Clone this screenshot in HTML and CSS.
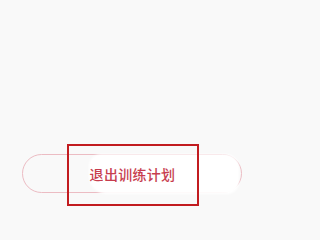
FILE: index.html
```html
<!DOCTYPE html>
<html lang="zh">
<head>
<meta charset="utf-8">
<link rel="stylesheet" href="styles.css">
</head>
<body>
<div class="page">
  <div class="footer">
    <div class="pill">
      <div class="smudge"></div>
      <span class="label">退出训练计划</span>
    </div>
  </div>
  <div class="mark"></div>
</div>
</body>
</html>
```
FILE: styles.css
```css
html, body {
  margin: 0;
  padding: 0;
  background: #f9f9f9;
}
.page {
  position: relative;
  width: 264px;
  height: 212px;
  overflow: hidden;
  font-family: "Noto Sans CJK SC", "Noto Sans", sans-serif;
}
.footer {
  padding: 154px 22px 0 22px;
}
.pill {
  position: relative;
  height: 37px;
  border: 1px solid #ecbcc3;
  border-radius: 20px;
  display: flex;
  align-items: center;
  justify-content: center;
}
.smudge {
  position: absolute;
  left: 66px;
  top: -1px;
  width: 150px;
  height: 40px;
  background: #ffffff;
  border-radius: 12px 14px 12px 18px;
  filter: blur(1px);
}
.label {
  position: relative;
  font-size: 14px;
  line-height: 16px;
  font-weight: 500;
  color: #c73d4e;
  letter-spacing: 0.3px;
  margin-left: 1px;
}
.mark {
  position: absolute;
  left: 67px;
  top: 144px;
  width: 128px;
  height: 58px;
  border: 2px solid #c21c20;
}
```
